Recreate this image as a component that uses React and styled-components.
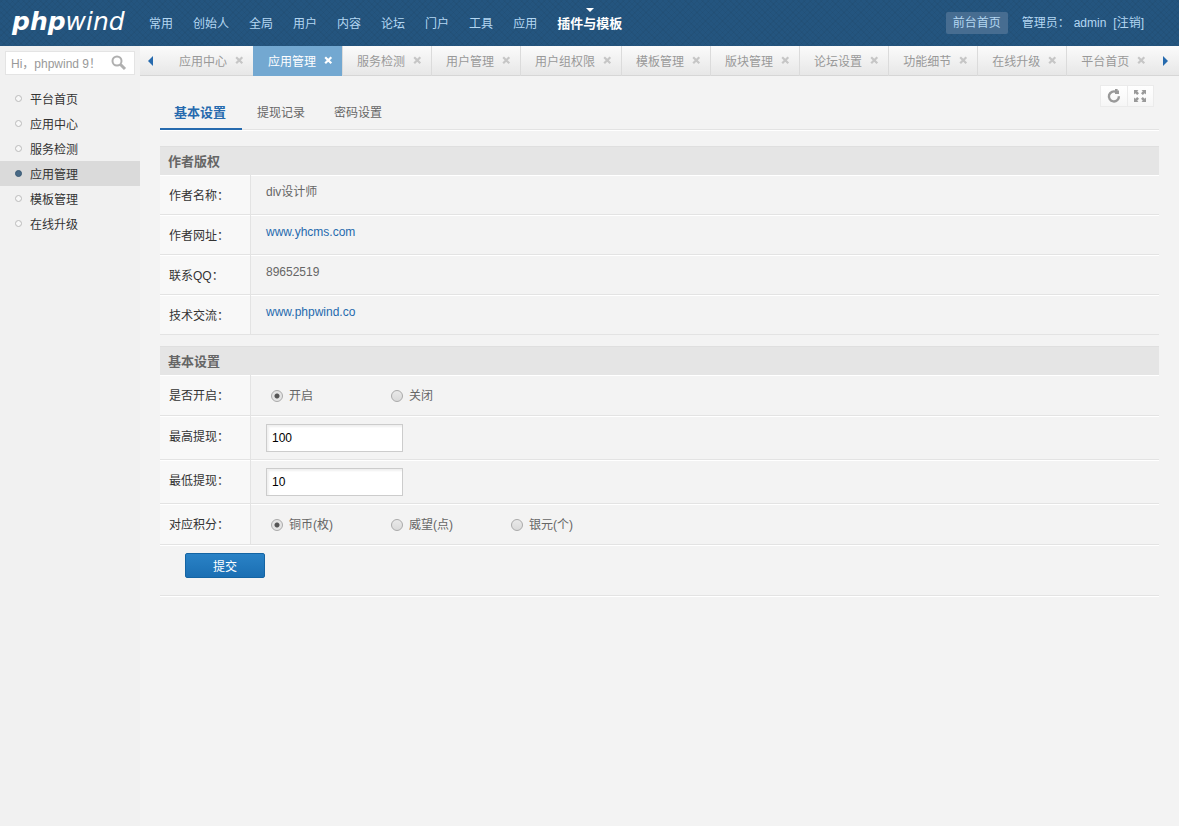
import styled, { createGlobalStyle } from "styled-components";

const GlobalStyle = createGlobalStyle`
  * {
    box-sizing: border-box;
  }
  body {
    margin: 0;
    background: #f3f3f3;
    color: #666;
    font: 12px/18px "Liberation Sans", "Noto Sans CJK SC", sans-serif;
  }
  #root {
    min-height: 100vh;
    display: flex;
  }
  input,
  button {
    font: inherit;
  }
  a {
    color: #266aae;
    text-decoration: none;
  }
`;

const Page = styled.div`
  flex: 1;
  min-width: 0;
  display: flex;
  flex-direction: column;
`;

const Header = styled.header`
  height: 46px;
  display: flex;
  align-items: center;
  color: #b4d7f2;
  background-color: #24557f;
  background-image:
    repeating-linear-gradient(45deg, rgba(0, 0, 0, 0.04) 0 1px, transparent 1px 4px),
    repeating-linear-gradient(-45deg, rgba(0, 0, 0, 0.04) 0 1px, transparent 1px 4px);
`;
const Logo = styled.a`
  width: 139px;
  padding: 0 0 2px 12px;
  color: #fff;
  font: italic 400 25px/36px "DejaVu Sans", sans-serif;
  b {
    font-weight: 700;
  }
`;
const Nav = styled.nav`
  flex: 1;
  display: flex;
`;
const NavLink = styled.a`
  position: relative;
  padding: 2px 10px 0;
  line-height: 44px;
  white-space: nowrap;
  color: ${(props) => (props.$active ? "#fff" : "#b4d7f2")};
  font-size: ${(props) => (props.$active ? "13px" : "12px")};
  font-weight: ${(props) => (props.$active ? "700" : "400")};
`;
const NavMark = styled.span`
  position: absolute;
  top: 8px;
  left: 50%;
  margin-left: -4px;
  border: 4px solid transparent;
  border-top-color: #fff;
  border-bottom: 0;
`;
const Account = styled.div`
  display: flex;
  align-items: center;
  padding-right: 35px;
  white-space: nowrap;
  a {
    color: #b4d7f2;
  }
`;
const HomeLink = styled.a`
  margin-right: 14px;
  padding: 2px 7px;
  border-radius: 2px;
  background: #476d91;
`;
const AdminLabel = styled.span`
  width: 52px;
`;
const LogoutLink = styled.a`
  margin-left: 7px;
`;

const Body = styled.div`
  flex: 1;
  display: flex;
`;
const Sidebar = styled.aside`
  width: 140px;
  flex: none;
  background: #f1f1f1;
`;
const Search = styled.form`
  display: flex;
  align-items: center;
  height: 24px;
  margin: 5px 5px 11px;
  border: 1px solid #e4e4e4;
  background: #fff;
`;
const SearchInput = styled.input`
  flex: 1;
  min-width: 0;
  padding: 1px 0 0 5px;
  border: 0;
  background: none;
  outline: none;
  &::placeholder {
    color: #999;
    opacity: 1;
  }
`;
const SearchButton = styled.button`
  display: flex;
  padding: 0 7px 0 0;
  border: 0;
  background: none;
`;
const Menu = styled.ul`
  margin: 0;
  padding: 0;
  list-style: none;
`;
const MenuLink = styled.a`
  display: flex;
  align-items: center;
  gap: 8px;
  height: 25px;
  padding: 2px 0 0 15px;
  color: #333;
  background: ${(props) => (props.$active ? "#dadada" : "none")};
`;
const Dot = styled.span`
  width: 7px;
  height: 7px;
  margin-bottom: 3px;
  border-radius: 50%;
  border: 1px solid ${(props) => (props.$active ? "#3a5a75" : "#bbb")};
  background: ${(props) => (props.$active ? "#486a86" : "#f8f8f8")};
`;

const Content = styled.div`
  flex: 1;
  min-width: 0;
`;
const TabBar = styled.div`
  display: flex;
  height: 30px;
  border-bottom: 1px solid #d6d6d6;
  background: linear-gradient(#fbfbfb, #e7e7e7);
`;
const Scroller = styled.button`
  display: flex;
  align-items: center;
  flex: none;
  width: 24px;
  padding: 1px 0 0 8px;
  border: 0;
  background: none;
`;
const Tabs = styled.div`
  flex: 1;
  min-width: 0;
  display: flex;
  overflow: hidden;
  height: 30px;
`;
const Tab = styled.div`
  display: flex;
  align-items: center;
  flex: none;
  height: 30px;
  gap: 8px;
  padding: 1px 9px 0 14px;
  border-left: 1px solid ${(props) => (props.$active ? "#73a8d1" : "#dbdbdb")};
  background: ${(props) => (props.$active ? "#73a8d1" : "none")};
  &:first-child {
    border-left-color: transparent;
  }
  a,
  button {
    color: ${(props) => (props.$active ? "#fff" : "#999")};
  }
  path {
    stroke: ${(props) => (props.$active ? "#fff" : "#c6c6c6")};
  }
`;
const CloseButton = styled.button`
  display: flex;
  padding: 0 0 2px;
  border: 0;
  background: none;
`;

const Main = styled.main`
  position: relative;
  padding: 20px 20px 0;
`;
const Tools = styled.div`
  position: absolute;
  top: 9px;
  right: 25px;
  display: flex;
  border: 1px solid #ebebeb;
`;
const ToolButton = styled.button`
  display: flex;
  align-items: center;
  justify-content: center;
  width: 26px;
  height: 20px;
  padding: 0 1px 0 0;
  border: 0;
  background: linear-gradient(#fff, #f6f6f6);
  & + & {
    border-left: 1px solid #ebebeb;
  }
`;
const SubNav = styled.nav`
  display: flex;
  height: 34px;
  margin-bottom: 16px;
  border-bottom: 1px solid #e3e3e3;
  box-shadow: 0 1px 0 #fff;
`;
const SubNavLink = styled.a`
  height: 34px;
  padding: 0 14px 0 15px;
  line-height: 34px;
  color: ${(props) => (props.$active ? "#266aae" : "#666")};
  font-size: 12px;
  ${(props) =>
    props.$active &&
    `
    padding: 0 16px 0 14px;
    border-bottom: 2px solid #266aae;
    font-size: 13px;
    font-weight: 700;
  `}
`;

const SectionTitle = styled.h2`
  height: 29px;
  margin: 0;
  padding: 0 8px;
  border-top: 1px solid #dfdfdf;
  background: #e5e5e5;
  color: #666;
  font-size: 13px;
  line-height: 29px;
`;
const Table = styled.table`
  width: 100%;
  margin-bottom: ${(props) => props.$gap};
  border-spacing: 0;
  table-layout: fixed;
`;
const Row = styled.tr`
  height: ${(props) => props.$height};
`;
const Th = styled.th`
  width: 91px;
  padding: ${(props) => (props.$raised ? "0 0 2px 9px" : "2px 0 0 9px")};
  border: solid #e3e3e3;
  border-width: 0 1px 1px 0;
  background: #f8f8f8;
  box-shadow: inset 0 1px 0 #fff;
  color: #333;
  font-weight: 400;
  text-align: left;
`;
const Td = styled.td`
  padding: ${(props) => (props.$raised ? "0 15px 6px" : "0 15px")};
  border-bottom: 1px solid #e3e3e3;
  box-shadow: inset 0 1px 0 #fff;
`;
const TextInput = styled.input`
  display: block;
  width: 137px;
  height: 28px;
  padding: 0 5px;
  border: 1px solid #ccc;
  background: #fff;
  box-shadow: inset 2px 2px 2px #f0f0f0;
  color: #000;
`;
const RadioGroup = styled.div`
  display: flex;
  padding-top: 2px;
`;
const RadioLabel = styled.label`
  display: flex;
  align-items: center;
  gap: 6px;
  width: 120px;
  padding-left: 5px;
`;
const Radio = styled.input`
  appearance: none;
  width: 12px;
  height: 12px;
  margin: 0;
  border: 1px solid #aaa;
  border-radius: 50%;
  background: linear-gradient(#e9e9e9, #dadada);
  &:checked {
    background: radial-gradient(circle, #555 0 2px, #e4e4e4 3px);
  }
`;
const Actions = styled.div`
  height: 51px;
  padding: 8px 25px 0;
  border-bottom: 1px solid #e3e3e3;
  box-shadow: 0 1px 0 #fff, inset 0 1px 0 #fff;
`;
const SubmitButton = styled.button`
  width: 80px;
  height: 25px;
  padding: 2px 0 0;
  border: 1px solid #1464a3;
  border-radius: 2px;
  background: linear-gradient(#2a82c6, #1b6fb3);
  color: #fff;
`;

const navItems = ["常用", "创始人", "全局", "用户", "内容", "论坛", "门户", "工具", "应用", "插件与模板"];
const menuItems = ["平台首页", "应用中心", "服务检测", "应用管理", "模板管理", "在线升级"];
const tabs = [
  "应用中心",
  "应用管理",
  "服务检测",
  "用户管理",
  "用户组权限",
  "模板管理",
  "版块管理",
  "论坛设置",
  "功能细节",
  "在线升级",
  "平台首页",
];
const authorRows = [
  { label: "作者名称：", text: "div设计师" },
  { label: "作者网址：", text: "www.yhcms.com", link: true },
  { label: "联系QQ：", text: "89652519" },
  { label: "技术交流：", text: "www.phpwind.co", link: true },
];

const SearchIcon = () => (
  <svg width="16" height="16" viewBox="0 0 16 16" fill="none" stroke="#b0b0b0">
    <circle cx="6" cy="6" r="4.5" strokeWidth="2" />
    <path d="M9.5 9.5 14 14" strokeWidth="3" />
  </svg>
);

const CloseIcon = () => (
  <svg width="9" height="9" viewBox="0 0 9 9">
    <path d="M1.2 1.2 7.3 7.3M7.3 1.2 1.2 7.3" strokeWidth="2.2" />
  </svg>
);

const RefreshIcon = () => (
  <svg width="14" height="14" viewBox="0 0 14 14">
    <path d="M9.2 3A5 5 0 1 0 11.9 7.2" fill="none" stroke="#999" strokeWidth="2.4" />
    <path d="M8 0h2.6v1.5H12V5H8z" fill="#999" />
  </svg>
);

const ExpandIcon = () => (
  <svg width="12" height="12" viewBox="0 0 12 12" fill="#999">
    <path d="M0 0h4.5L3.2 1.3 5 3.2 3.2 5 1.3 3.2 0 4.5z" />
    <path d="M12 0v4.5l-1.3-1.3L8.8 5 7 3.2l1.8-1.9L7.5 0z" />
    <path d="M0 12V7.5l1.3 1.3L3.2 7 5 8.8 3.2 10.7 4.5 12z" />
    <path d="M12 12H7.5l1.3-1.3L7 8.8 8.8 7l1.9 1.8L12 7.5z" />
  </svg>
);

const ArrowIcon = ({ d }) => (
  <svg width="5" height="10" viewBox="0 0 5 10" fill="#266aae">
    <path d={d} />
  </svg>
);

const RadioOptions = ({ name, label, options }) => (
  <RadioGroup role="radiogroup" aria-label={label}>
    {options.map((option, i) => (
      <RadioLabel key={option}>
        <Radio type="radio" name={name} defaultChecked={i === 0} />
        {option}
      </RadioLabel>
    ))}
  </RadioGroup>
);

const App = () => {
  return (
    <Page>
      <GlobalStyle />
      <Header>
        <Logo href="#">
          <b>php</b>wind
        </Logo>
        <Nav>
          {navItems.map((item, i) => {
            const active = i === navItems.length - 1;
            return (
              <NavLink key={item} href="#" $active={active}>
                {active && <NavMark />}
                {item}
              </NavLink>
            );
          })}
        </Nav>
        <Account>
          <HomeLink href="#">前台首页</HomeLink>
          <AdminLabel>管理员：</AdminLabel>
          <span>admin</span>
          <LogoutLink href="#">[注销]</LogoutLink>
        </Account>
      </Header>
      <Body>
        <Sidebar>
          <Search>
            <SearchInput type="text" aria-label="搜索" placeholder="Hi，phpwind 9！" />
            <SearchButton type="button" aria-label="搜索">
              <SearchIcon />
            </SearchButton>
          </Search>
          <Menu>
            {menuItems.map((item) => (
              <li key={item}>
                <MenuLink href="#" $active={item === "应用管理"}>
                  <Dot $active={item === "应用管理"} />
                  {item}
                </MenuLink>
              </li>
            ))}
          </Menu>
        </Sidebar>
        <Content>
          <TabBar>
            <Scroller type="button" aria-label="向左">
              <ArrowIcon d="M5 0v10L0 5z" />
            </Scroller>
            <Tabs>
              {tabs.map((tab) => (
                <Tab key={tab} $active={tab === "应用管理"}>
                  <a href="#">{tab}</a>
                  <CloseButton type="button" aria-label="关闭">
                    <CloseIcon />
                  </CloseButton>
                </Tab>
              ))}
            </Tabs>
            <Scroller type="button" aria-label="向右">
              <ArrowIcon d="M0 0v10l5-5z" />
            </Scroller>
          </TabBar>
          <Main>
            <Tools>
              <ToolButton type="button" aria-label="刷新">
                <RefreshIcon />
              </ToolButton>
              <ToolButton type="button" aria-label="全屏">
                <ExpandIcon />
              </ToolButton>
            </Tools>
            <SubNav>
              <SubNavLink href="#" $active>
                基本设置
              </SubNavLink>
              <SubNavLink href="#">提现记录</SubNavLink>
              <SubNavLink href="#">密码设置</SubNavLink>
            </SubNav>

            <SectionTitle>作者版权</SectionTitle>
            <Table $gap="11px">
              <tbody>
                {authorRows.map((row) => (
                  <Row key={row.label} $height="40px">
                    <Th scope="row">{row.label}</Th>
                    <Td $raised>{row.link ? <a href="#">{row.text}</a> : row.text}</Td>
                  </Row>
                ))}
              </tbody>
            </Table>

            <form>
              <SectionTitle>基本设置</SectionTitle>
              <Table $gap="0">
                <tbody>
                  <Row $height="41px">
                    <Th scope="row">是否开启：</Th>
                    <Td>
                      <RadioOptions name="open" label="是否开启" options={["开启", "关闭"]} />
                    </Td>
                  </Row>
                  <Row $height="44px">
                    <Th scope="row" $raised>
                      <label htmlFor="max">最高提现：</label>
                    </Th>
                    <Td>
                      <TextInput id="max" type="text" defaultValue="100" />
                    </Td>
                  </Row>
                  <Row $height="44px">
                    <Th scope="row" $raised>
                      <label htmlFor="min">最低提现：</label>
                    </Th>
                    <Td>
                      <TextInput id="min" type="text" defaultValue="10" />
                    </Td>
                  </Row>
                  <Row $height="41px">
                    <Th scope="row">对应积分：</Th>
                    <Td>
                      <RadioOptions
                        name="credit"
                        label="对应积分"
                        options={["铜币(枚)", "威望(点)", "银元(个)"]}
                      />
                    </Td>
                  </Row>
                </tbody>
              </Table>
              <Actions>
                <SubmitButton type="button">提交</SubmitButton>
              </Actions>
            </form>
          </Main>
        </Content>
      </Body>
    </Page>
  );
};

export default App;
